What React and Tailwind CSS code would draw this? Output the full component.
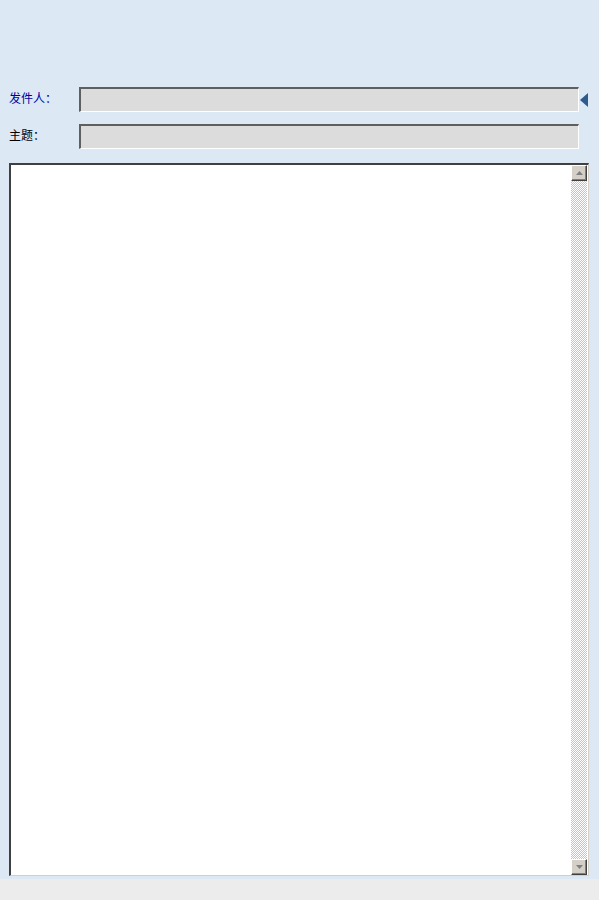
const font = { fontFamily: '"Noto Sans CJK SC", "DejaVu Sans", sans-serif' };

const ScrollButton = ({ dir }) => (
  <div className="flex h-[16px] w-[16px] items-center justify-center border border-t-white border-l-white border-b-[#404040] border-r-[#404040] bg-[#d4d0c8] shadow-[inset_-1px_-1px_0_#808080]">
    <svg width="7" height="4" viewBox="0 0 7 4">
      {dir === "up" ? (
        <polygon points="3.5,0 7,4 0,4" fill="#808080" />
      ) : (
        <polygon points="0,0 7,0 3.5,4" fill="#808080" />
      )}
    </svg>
  </div>
);

const Field = ({ label, blue, arrow }) => (
  <div className="flex h-[25px] items-center">
    <label
      style={font}
      className={`-mt-[3px] w-[79px] shrink-0 pl-[9px] text-[12px] ${blue ? "text-[#0000a0]" : "text-black"}`}
    >
      {label}
    </label>
    <div className="h-[25px] w-[500px] shrink-0 border-t-2 border-l-2 border-b border-r border-t-[#5f5f5f] border-l-[#5f5f5f] border-b-white border-r-white bg-[#dcdcdc]" />
    {arrow ? (
      <svg width="8" height="14" viewBox="0 0 8 14" className="ml-[1px] shrink-0">
        <polygon points="8,0 8,14 0,7" fill="#2f5b8c" />
      </svg>
    ) : null}
  </div>
);

export default function App() {
  return (
    <div className="flex h-[900px] w-[599px] flex-col bg-[#dce9f5]">
      <div className="flex flex-col gap-[12px] pt-[87px]">
        <Field label="发件人：" blue arrow />
        <Field label="主题：" />
      </div>
      <div className="ml-[9px] mt-[14px] flex h-[713px] w-[580px] border-t-2 border-l-2 border-b border-r border-t-[#404040] border-l-[#404040] border-b-[#d4d0c8] border-r-[#d4d0c8] bg-white">
        <div className="flex-1" />
        <div className="mr-[1px] flex w-[16px] flex-col bg-[repeating-conic-gradient(#c8c4bc_0_25%,#ffffff_0_50%)] bg-[length:2px_2px]">
          <ScrollButton dir="up" />
          <div className="flex-1" />
          <ScrollButton dir="down" />
        </div>
      </div>
      <div className="mt-[3px] flex-1 bg-[#ececec]" />
    </div>
  );
}
